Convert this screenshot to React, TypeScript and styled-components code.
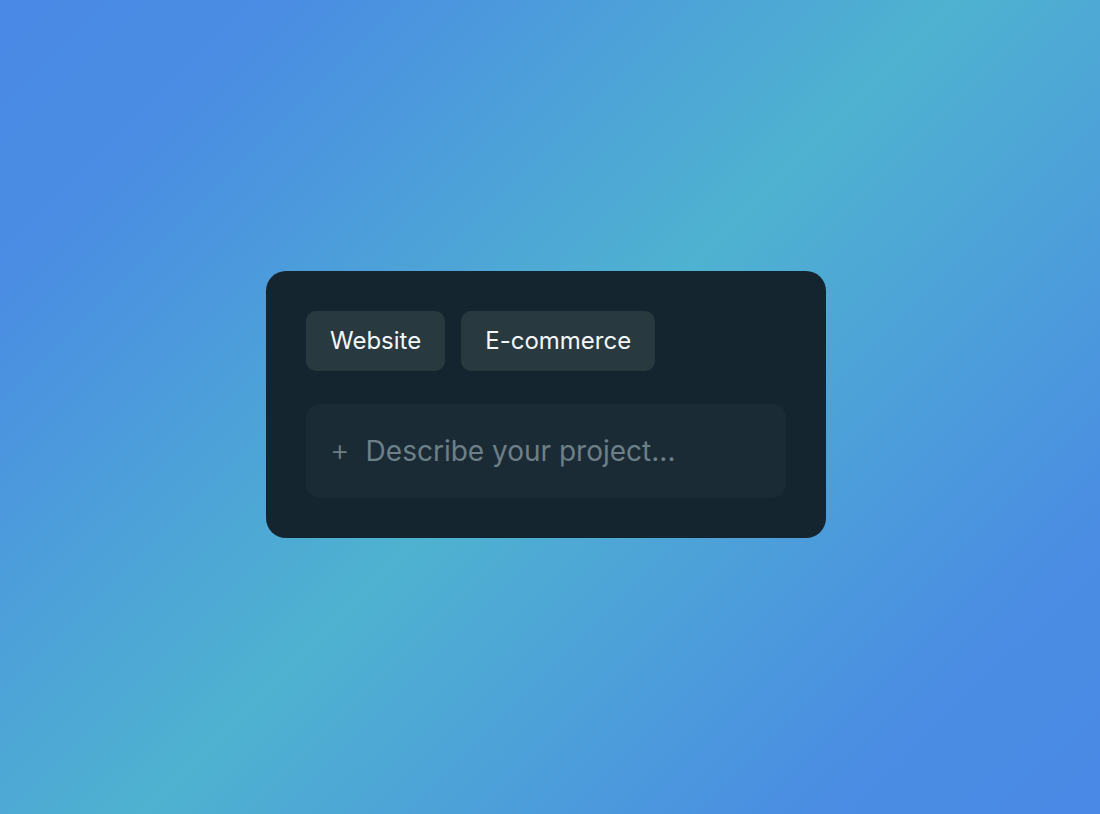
import styled, { createGlobalStyle } from "styled-components";

const GlobalStyle = createGlobalStyle`
  html, body {
    margin: 0;
    padding: 0;
    overflow: hidden;
  }
  body {
    font-family: Inter, "Noto Sans", sans-serif;
  }
`;

const Page = styled.div`
  width: 100vw;
  height: 100vh;
  display: flex;
  align-items: center;
  justify-content: center;
  background: linear-gradient(
    135deg,
    #4a89e6 0%,
    #4a8de3 15%,
    #4fb2d0 50%,
    #4a8de3 85%,
    #4a89e6 100%
  );
`;

const Card = styled.div`
  width: 560px;
  box-sizing: border-box;
  padding: 40px;
  background: #15252f;
  border-radius: 20px;
  display: flex;
  flex-direction: column;
  gap: 33px;
  margin-left: -8px;
  margin-top: -6px;
`;

const ChipRow = styled.div`
  display: flex;
  gap: 16px;
`;

const Chip = styled.button`
  height: 60px;
  padding: 0 24px;
  border: none;
  border-radius: 10px;
  background: #283940;
  color: #f4f7f8;
  font-family: Inter, "Noto Sans", sans-serif;
  font-size: 24px;
  cursor: pointer;
`;

const InputBox = styled.label`
  height: 94px;
  box-sizing: border-box;
  display: flex;
  align-items: center;
  gap: 16px;
  padding: 0 24px;
  border-radius: 14px;
  background: #1a2b35;
`;

const Plus = styled.span`
  color: #6d7f87;
  font-size: 30px;
  font-weight: 300;
  line-height: 1;
  margin-top: -2px;
`;

const Input = styled.input`
  flex: 1;
  border: none;
  background: transparent;
  outline: none;
  padding: 0;
  color: #d8e0e3;
  font-family: Inter, "Noto Sans", sans-serif;
  font-size: 28px;
  &::placeholder {
    color: #6d7f87;
  }
`;

const App = () => {
  return (
    <Page>
      <GlobalStyle />
      <Card>
        <ChipRow>
          <Chip>Website</Chip>
          <Chip>E-commerce</Chip>
        </ChipRow>
        <InputBox>
          <Plus>+</Plus>
          <Input placeholder="Describe your project..." />
        </InputBox>
      </Card>
    </Page>
  );
};

export default App;
